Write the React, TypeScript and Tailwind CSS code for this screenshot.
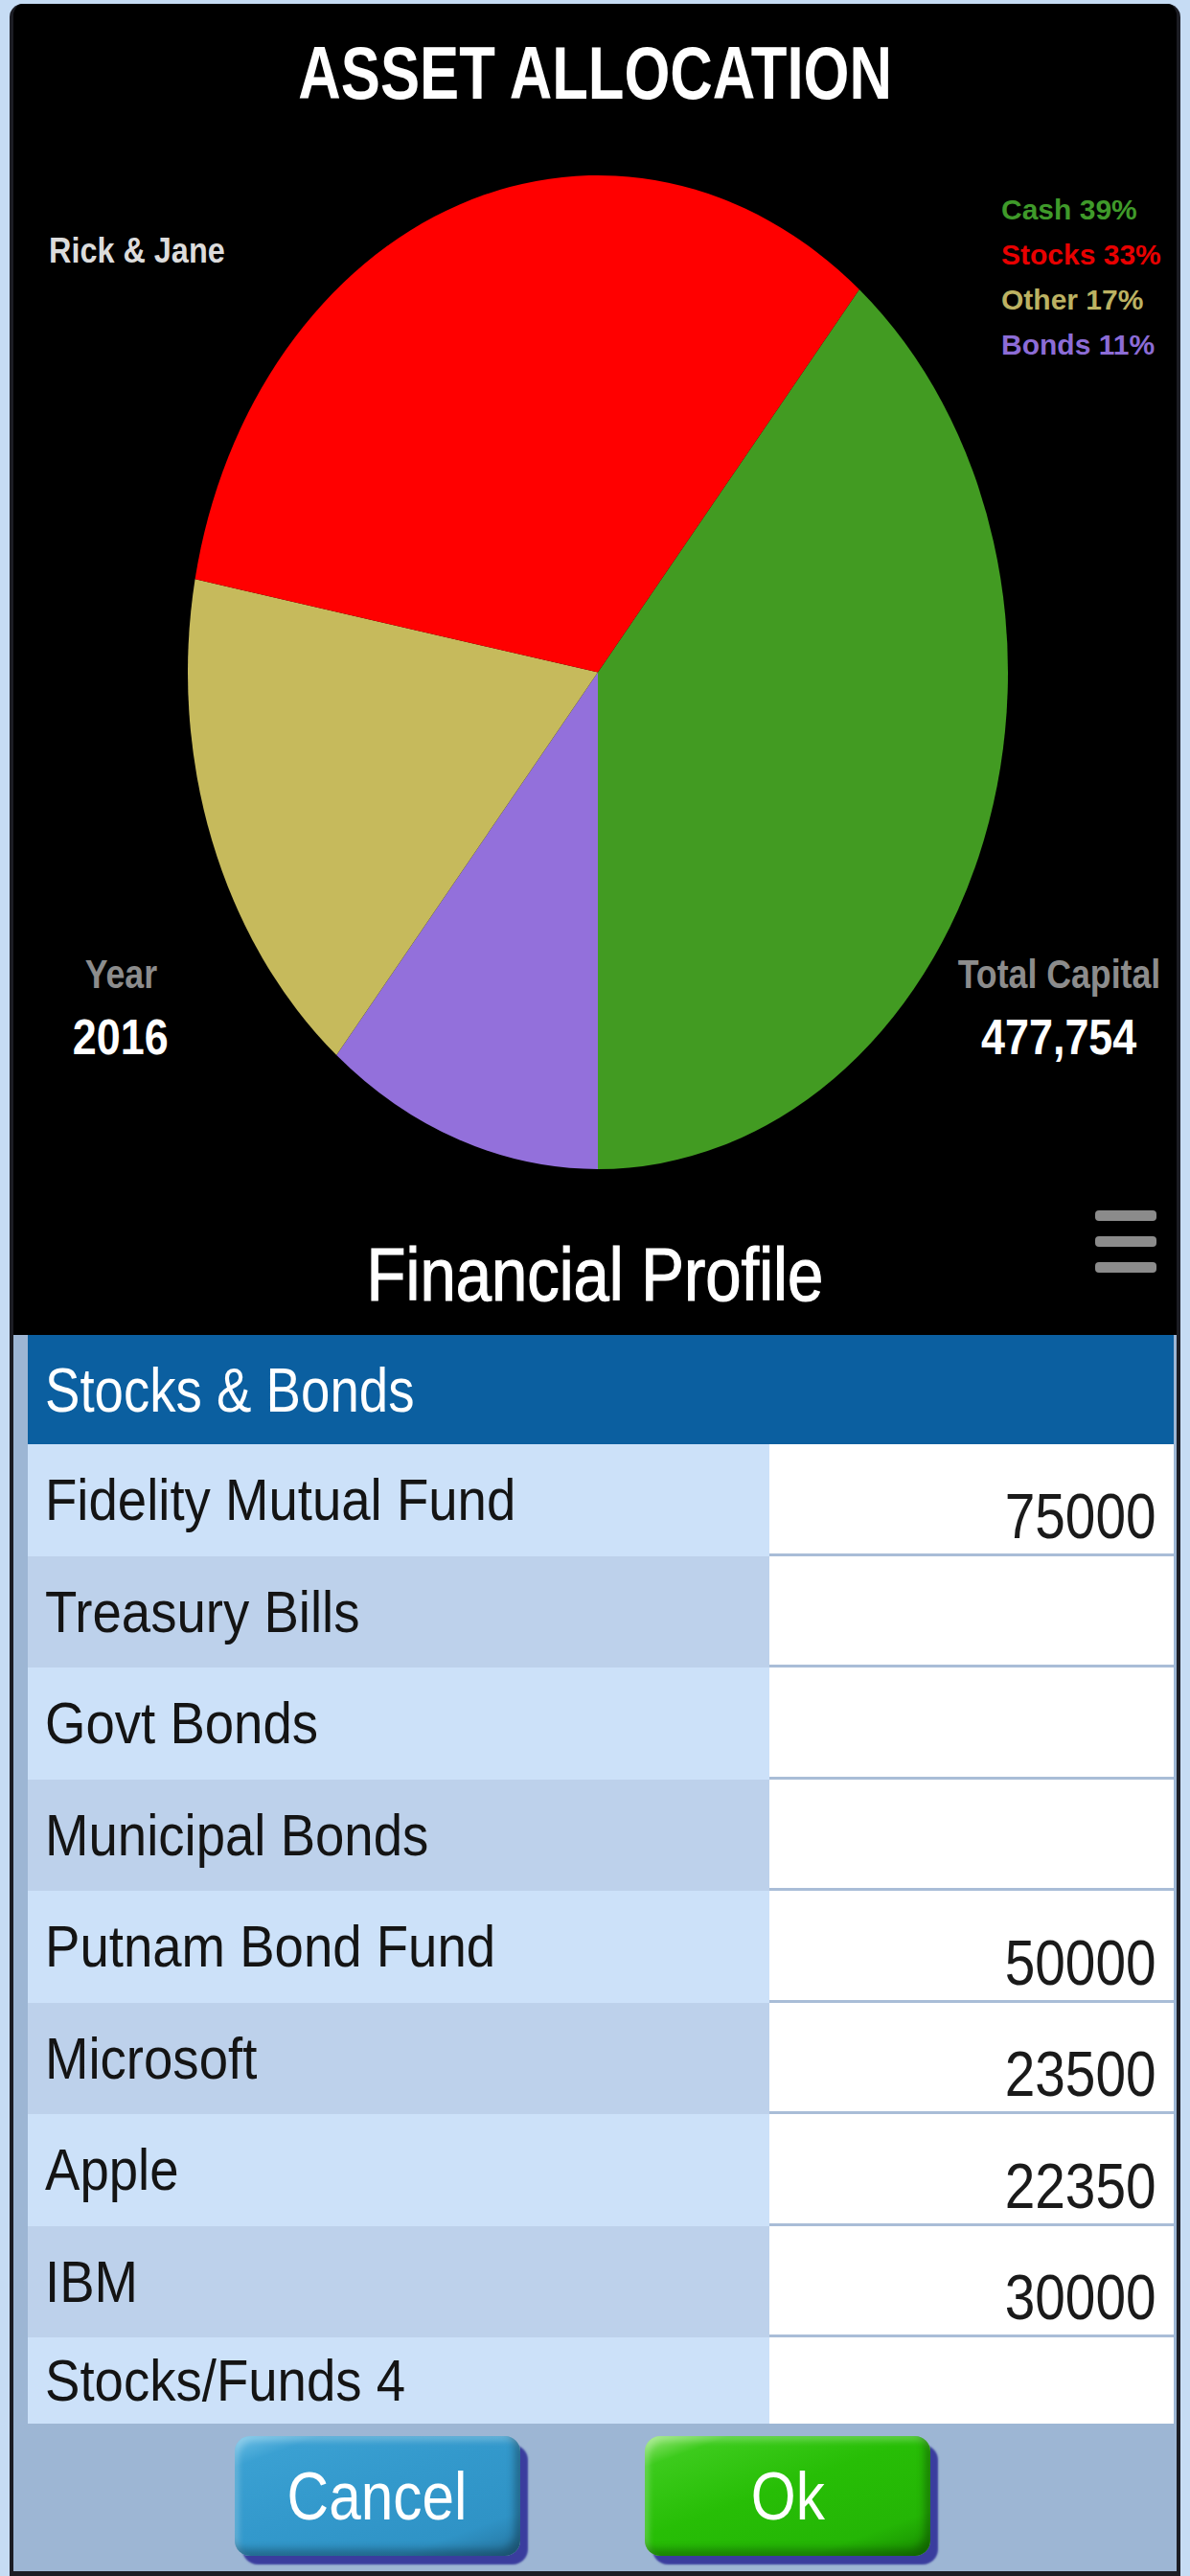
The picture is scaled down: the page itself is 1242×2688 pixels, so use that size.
import { ReactNode } from 'react';

const slices = [
  { label: 'Cash', pct: 39, fill: '#429b22', text: 'text-[#3f9a2a]' },
  { label: 'Bonds', pct: 11, fill: '#9370db', text: 'text-[#8c6cd6]' },
  { label: 'Other', pct: 17, fill: '#c6ba5c', text: 'text-[#bcb262]' },
  { label: 'Stocks', pct: 33, fill: '#ff0000', text: 'text-[#e80000]' },
];

const legendOrder = ['Cash', 'Stocks', 'Other', 'Bonds'];

const holdings: [string, string][] = [
  ['Fidelity Mutual Fund', '75000'],
  ['Treasury Bills', ''],
  ['Govt Bonds', ''],
  ['Municipal Bonds', ''],
  ['Putnam Bond Fund', '50000'],
  ['Microsoft', '23500'],
  ['Apple', '22350'],
  ['IBM', '30000'],
  ['Stocks/Funds 4', ''],
];

// the screenshot is stretched vertically, so text gets squeezed sideways
function Squish({ className, children }: { className: string; children: ReactNode }) {
  return <span className={'inline-block whitespace-nowrap ' + className}>{children}</span>;
}

function point(deg: number) {
  const r = (deg * Math.PI) / 180;
  return `${(100 * Math.sin(r)).toFixed(3)} ${(-100 * Math.cos(r)).toFixed(3)}`;
}

function Pie() {
  // Cash ends at the bottom (180deg), going clockwise from there
  let start = 180 - slices[0].pct * 3.6;
  return (
    <svg
      viewBox="-100 -100 200 200"
      preserveAspectRatio="none"
      className="block h-[1037px] w-[856px]"
    >
      {slices.map((s) => {
        const end = start + s.pct * 3.6;
        const large = end - start > 180 ? 1 : 0;
        const d = `M0 0 L${point(start)} A100 100 0 ${large} 1 ${point(end)} Z`;
        start = end;
        return <path key={s.label} d={d} fill={s.fill} />;
      })}
    </svg>
  );
}

function Hamburger() {
  return (
    <div className="absolute right-[21px] top-[1259px] flex flex-col gap-[16px]">
      <div className="h-[11px] w-[64px] rounded-[4px] bg-[#8b8b8b]" />
      <div className="h-[11px] w-[64px] rounded-[4px] bg-[#8b8b8b]" />
      <div className="h-[11px] w-[64px] rounded-[4px] bg-[#8b8b8b]" />
    </div>
  );
}

function ChartPanel() {
  return (
    <div className="relative flex h-[1389px] flex-col bg-black">
      <div className="pt-[33px] text-center text-[78px] font-bold leading-none text-white">
        <Squish className="scale-x-[0.79] origin-center">ASSET ALLOCATION</Squish>
      </div>

      <div className="ml-[182px] mt-[68px]">
        <Pie />
      </div>

      <div className="mt-[72px] text-center text-[77px] leading-none text-white [-webkit-text-stroke:1.2px_white]">
        <Squish className="scale-x-[0.87] origin-center">Financial Profile</Squish>
      </div>

      <div className="absolute left-[37px] top-[240px] text-[36px] font-bold leading-none text-[#dcdcdc]">
        <Squish className="scale-x-[0.9] origin-left">Rick &amp; Jane</Squish>
      </div>

      <div className="absolute left-[1031px] top-[191px] flex flex-col text-[30px] font-bold leading-[47px]">
        {legendOrder.map((name) => {
          const s = slices.find((x) => x.label === name)!;
          return (
            <span key={name} className={s.text}>
              {s.label} {s.pct}%
            </span>
          );
        })}
      </div>

      <div className="absolute left-[12px] top-[992px] flex w-[200px] flex-col items-center font-bold leading-none">
        <Squish className="scale-x-[0.85] origin-center text-[42px] text-[#8c8c8c]">Year</Squish>
        <Squish className="mt-[19px] scale-x-[0.88] origin-center text-[51px] text-white">2016</Squish>
      </div>

      <div className="absolute left-[971px] top-[992px] flex w-[240px] flex-col items-center font-bold leading-none">
        <Squish className="scale-x-[0.85] origin-center text-[42px] text-[#8c8c8c]">Total Capital</Squish>
        <Squish className="mt-[19px] scale-x-[0.88] origin-center text-[51px] text-white">477,754</Squish>
      </div>

      <Hamburger />
    </div>
  );
}

function HoldingRow({ label, value, index, last }: { label: string; value: string; index: number; last: boolean }) {
  return (
    <div className={last ? 'flex h-[90px]' : 'flex h-[116.5px]'}>
      <div
        className={
          index % 2 === 0
            ? 'flex w-[774px] items-center bg-[#cce1f9] pl-[18px]'
            : 'flex w-[774px] items-center bg-[#bdd1eb] pl-[18px]'
        }
      >
        <Squish className="scale-x-[0.88] origin-left text-[62px] leading-none text-[#141414]">{label}</Squish>
      </div>
      <div
        className={
          last
            ? 'flex flex-1 items-end justify-end bg-white pb-[6px] pr-[18px]'
            : 'flex flex-1 items-end justify-end border-b-[3px] border-[#a9bdd7] bg-white pb-[6px] pr-[18px]'
        }
      >
        {value && (
          <Squish className="scale-x-[0.86] origin-right text-[66px] leading-none text-[#1a1a1a]">{value}</Squish>
        )}
      </div>
    </div>
  );
}

function ActionButton({ label, tone }: { label: string; tone: 'blue' | 'green' }) {
  const look =
    tone === 'blue'
      ? 'bg-[linear-gradient(160deg,#6cc0e6_0%,#3aa0d2_14%,#3399cc_45%,#2f93c6_80%,#25729c_100%)]'
      : 'bg-[linear-gradient(160deg,#9ae87c_0%,#3ccb1c_14%,#27be06_45%,#24b505_80%,#178a00_100%)]';
  return (
    <div
      className={
        'flex h-[125px] w-[298px] items-center justify-center rounded-[16px] shadow-[inset_-6px_-7px_8px_rgba(0,0,0,0.3),inset_4px_5px_6px_rgba(255,255,255,0.25),8px_9px_2px_#3a3d9e] ' +
        look
      }
    >
      <Squish className="scale-x-[0.85] origin-center text-[71px] leading-none text-white">{label}</Squish>
    </div>
  );
}

function TablePanel() {
  return (
    <div className="flex h-[1290px] flex-col bg-[#9db6d4] pl-[15px] pr-[3px]">
      <div className="flex h-[114px] items-center bg-[#0b5fa0] pl-[18px]">
        <Squish className="scale-x-[0.84] origin-left text-[65px] leading-none text-white">Stocks &amp; Bonds</Squish>
      </div>
      {holdings.map(([label, value], i) => (
        <HoldingRow key={label} label={label} value={value} index={i} last={i === holdings.length - 1} />
      ))}
      <div className="flex flex-1 gap-[130px] pl-[216px] pt-[13px]">
        <ActionButton label="Cancel" tone="blue" />
        <ActionButton label="Ok" tone="green" />
      </div>
    </div>
  );
}

export default function App() {
  return (
    <div className="h-[2688px] w-[1242px] overflow-hidden bg-[#c6dcf4] px-[10px] pt-[4px] font-['Liberation_Sans',Arial,sans-serif]">
      <div className="overflow-hidden rounded-t-[14px] border-x-4 border-b-[5px] border-[#1c1d24] bg-black">
        <ChartPanel />
        <TablePanel />
      </div>
    </div>
  );
}
